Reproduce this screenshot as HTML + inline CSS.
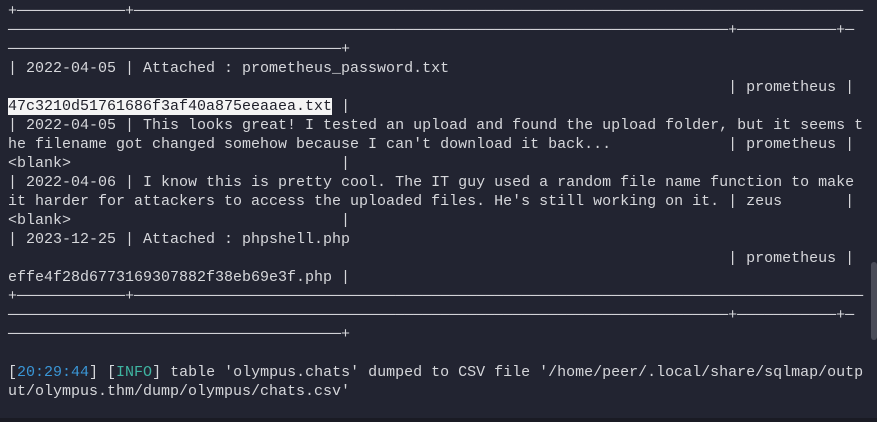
<!DOCTYPE html>
<html><head><meta charset="utf-8"><style>
html,body{margin:0;padding:0;width:877px;height:422px;overflow:hidden;background:#222431;}
pre{margin:0;position:absolute;left:8px;top:2px;font-family:"Liberation Mono","DejaVu Sans Mono",monospace;font-size:15px;line-height:19px;color:#d6d7db;white-space:pre;}
.hl{background:#f4f4f4;color:#1e1f29;}
.b{color:#3a96d6}.t{color:#3fb5a2}
.sb{position:absolute;left:871px;top:262px;width:6px;height:78px;background:#4a4c58;border-radius:3px;}
.bot{position:absolute;left:0;top:418px;width:877px;height:4px;background:#1a1b24;}
</style></head><body>
<pre>+────────────+─────────────────────────────────────────────────────────────────────────────────
────────────────────────────────────────────────────────────────────────────────+───────────+─
─────────────────────────────────────+
| 2022-04-05 | Attached : prometheus_password.txt
                                                                                | prometheus |
<span class="hl">47c3210d51761686f3af40a875eeaaea.txt</span> |
| 2022-04-05 | This looks great! I tested an upload and found the upload folder, but it seems t
he filename got changed somehow because I can't download it back...             | prometheus |
&lt;blank&gt;                              |
| 2022-04-06 | I know this is pretty cool. The IT guy used a random file name function to make
it harder for attackers to access the uploaded files. He's still working on it. | zeus       |
&lt;blank&gt;                              |
| 2023-12-25 | Attached : phpshell.php
                                                                                | prometheus |
effe4f28d6773169307882f38eb69e3f.php |
+────────────+─────────────────────────────────────────────────────────────────────────────────
────────────────────────────────────────────────────────────────────────────────+───────────+─
─────────────────────────────────────+

[<span class="b">20:29:44</span>] [<span class="t">INFO</span>] table 'olympus.chats' dumped to CSV file '/home/peer/.local/share/sqlmap/outp
ut/olympus.thm/dump/olympus/chats.csv'</pre>
<div class="sb"></div>
<div class="bot"></div>
</body></html>
